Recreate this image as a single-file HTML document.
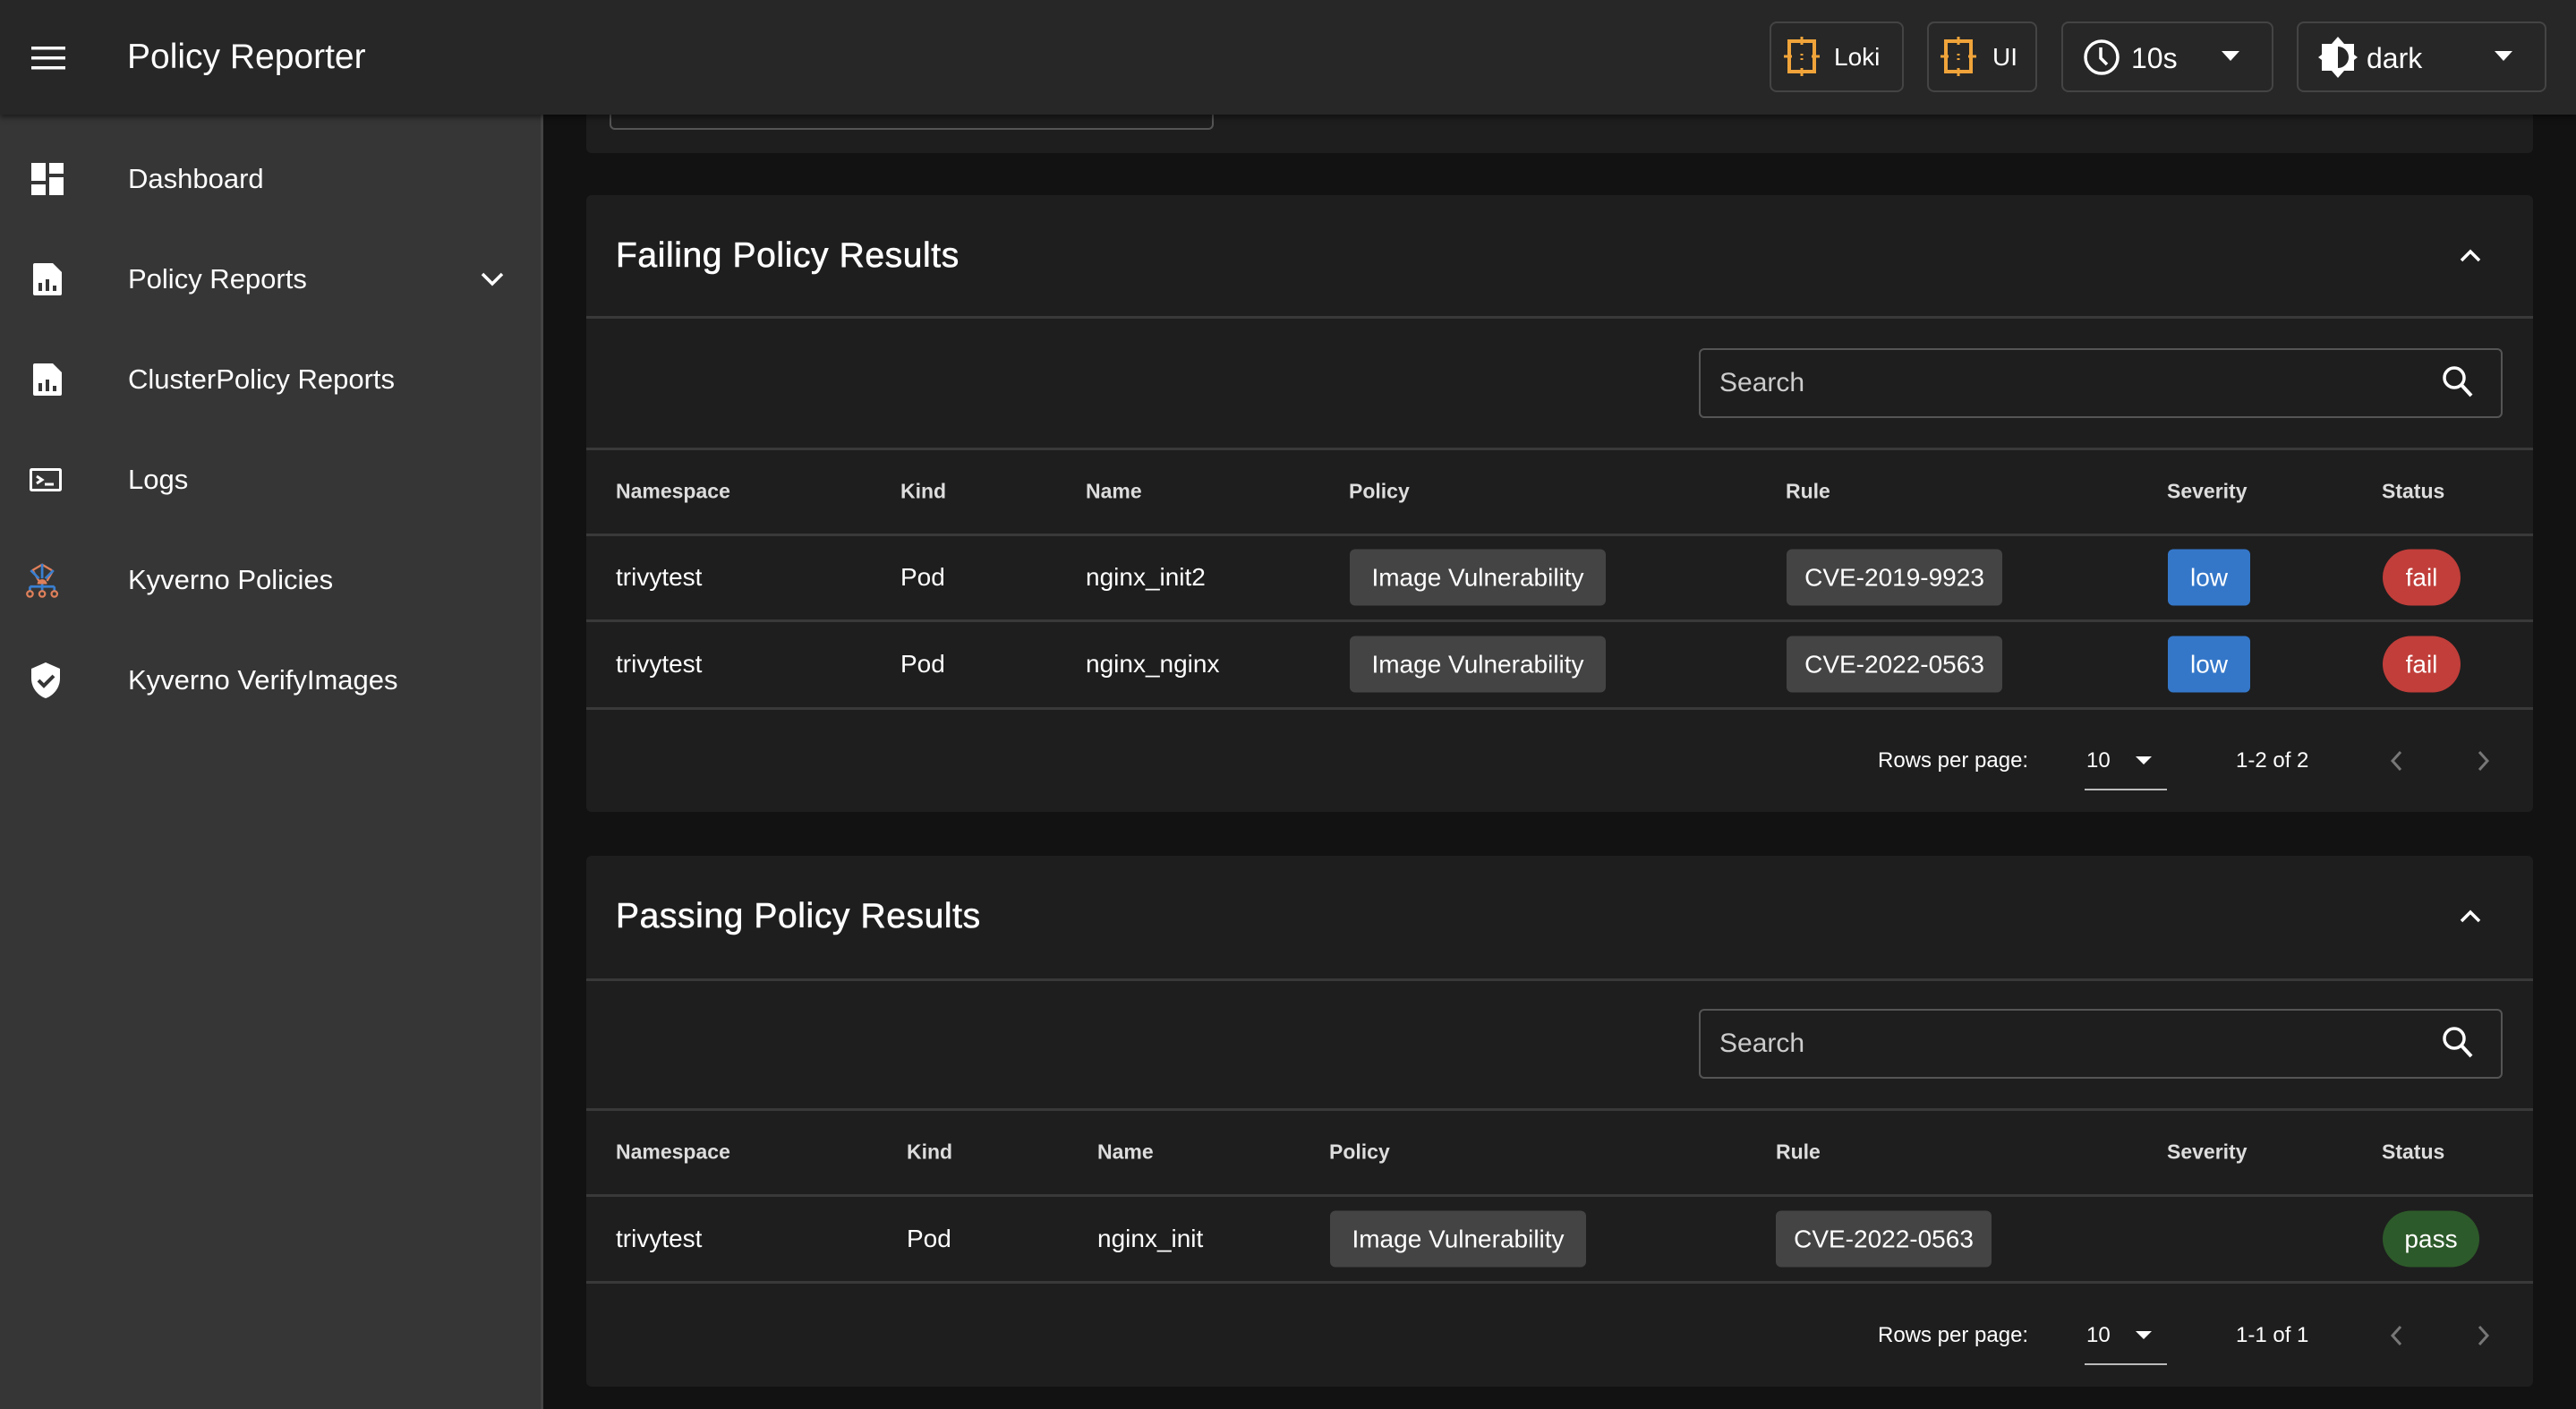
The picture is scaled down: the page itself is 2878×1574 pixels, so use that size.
<!DOCTYPE html>
<html><head><meta charset="utf-8"><style>
*{box-sizing:border-box;margin:0;padding:0}
body{width:2878px;height:1574px;background:#121212;font-family:"Liberation Sans",sans-serif;color:#fff;position:relative;overflow:hidden}
.a{position:absolute}
.bar{left:0;top:0;width:2878px;height:128px;background:#272727;box-shadow:0 3px 6px rgba(0,0,0,.5);z-index:5}
.side{left:0;top:128px;width:607px;height:1446px;background:#363636;border-right:3px solid #444}
.nav{left:143px;font-size:31px;color:#fff;transform:translateY(-50%)}
.ic{left:33px;transform:translateY(-50%)}
.btn{top:24px;height:79px;border:2px solid #444;border-radius:8px;background:#272727}
.card{left:655px;width:2175px;background:#1e1e1e;border-radius:6px}
.title{left:688px;font-size:39px;letter-spacing:0.6px;transform:translateY(-50%);-webkit-text-stroke:0.6px #fff}
.hr{left:655px;width:2175px;height:3px;background:#393939}
.search{left:1898px;width:898px;height:78px;border:2px solid #555;border-radius:6px}
.th{font-size:23px;font-weight:bold;color:#ddd;transform:translateY(-50%)}
.td{font-size:28px;color:#fff;transform:translateY(-50%)}
.chip{height:63px;line-height:63px;font-size:28px;text-align:center;border-radius:6px;transform:translateY(-50%)}
.pg{font-size:24px;transform:translateY(-50%)}
</style></head><body>
<div class="a bar">
 <svg class="a" style="left:35px;top:52px" width="38" height="26"><rect y="0" width="38" height="3.5" fill="#fff"/><rect y="11" width="38" height="3.5" fill="#fff"/><rect y="22" width="38" height="3.5" fill="#fff"/></svg>
 <div class="a" style="left:142px;top:42px;font-size:39px">Policy Reporter</div>
 <div class="a btn" style="left:1977px;width:150px"></div>
 <svg class="a" style="left:1993px;top:41px" width="40" height="44" viewBox="0 0 40 44"><rect x="6" y="5" width="28" height="34" fill="none" stroke="#f0a43a" stroke-width="4"/><path d="M20 0v9M20 35v9M0 22h9M31 22h9M20 19v2M20 24v2" stroke="#f0a43a" stroke-width="3"/></svg>
 <div class="a" style="left:2049px;top:48px;font-size:28px">Loki</div>
 <div class="a btn" style="left:2153px;width:123px"></div>
 <svg class="a" style="left:2168px;top:41px" width="40" height="44" viewBox="0 0 40 44"><rect x="6" y="5" width="28" height="34" fill="none" stroke="#f0a43a" stroke-width="4"/><path d="M20 0v9M20 35v9M0 22h9M31 22h9M20 19v2M20 24v2" stroke="#f0a43a" stroke-width="3"/></svg>
 <div class="a" style="left:2226px;top:48px;font-size:28px">UI</div>
 <div class="a btn" style="left:2303px;width:237px"></div>
 <svg class="a" style="left:2327px;top:43px" width="42" height="42" viewBox="0 0 42 42"><circle cx="21" cy="21" r="18" fill="none" stroke="#fff" stroke-width="3.5"/><path d="M20 10v12l7 7" fill="none" stroke="#fff" stroke-width="3.5"/></svg>
 <div class="a" style="left:2381px;top:47px;font-size:32px">10s</div>
 <div class="a" style="left:2482px;top:57px;width:0;height:0;border-left:10px solid transparent;border-right:10px solid transparent;border-top:11px solid #fff"></div>
 <div class="a btn" style="left:2566px;width:279px"></div>
 <svg class="a" style="left:2590px;top:41px" width="44" height="46" viewBox="0 0 44 46"><path d="M22 0l7 8h11v12l4 3-4 3v12H29l-7 8-7-8H4V26l-4-3 4-3V8h11z" fill="#fff"/><path d="M22 11a12 12 0 0 1 0 24z" fill="#272727"/></svg>
 <div class="a" style="left:2644px;top:47px;font-size:32px">dark</div>
 <div class="a" style="left:2787px;top:57px;width:0;height:0;border-left:10px solid transparent;border-right:10px solid transparent;border-top:11px solid #fff"></div>
</div>
<div class="a side"></div>
<svg class="a ic" style="top:200px" width="40" height="40" viewBox="0 0 40 40"><rect x="2" y="2" width="16" height="20" fill="#fff"/><rect x="2" y="26" width="16" height="12" fill="#fff"/><rect x="22" y="2" width="16" height="12" fill="#fff"/><rect x="22" y="18" width="16" height="20" fill="#fff"/></svg>
<div class="a nav" style="top:200px">Dashboard</div>
<svg class="a ic" style="top:312px" width="40" height="40" viewBox="0 0 40 40"><path d="M6 2h20l10 10v24a2 2 0 0 1-2 2H6a2 2 0 0 1-2-2V4a2 2 0 0 1 2-2z" fill="#fff"/><rect x="10" y="24" width="4" height="9" fill="#363636"/><rect x="18" y="20" width="4" height="13" fill="#363636"/><rect x="26" y="27" width="4" height="6" fill="#363636"/></svg>
<div class="a nav" style="top:312px">Policy Reports</div>
<svg class="a" style="left:537px;top:303px" width="26" height="17"><path d="M2 3l11 11 11-11" fill="none" stroke="#fff" stroke-width="3.5"/></svg>
<svg class="a ic" style="top:424px" width="40" height="40" viewBox="0 0 40 40"><path d="M6 2h20l10 10v24a2 2 0 0 1-2 2H6a2 2 0 0 1-2-2V4a2 2 0 0 1 2-2z" fill="#fff"/><rect x="10" y="24" width="4" height="9" fill="#363636"/><rect x="18" y="20" width="4" height="13" fill="#363636"/><rect x="26" y="27" width="4" height="6" fill="#363636"/></svg>
<div class="a nav" style="top:424px">ClusterPolicy Reports</div>
<svg class="a ic" style="top:536px" width="36" height="26" viewBox="0 0 36 26"><rect x="1.5" y="1.5" width="33" height="23" rx="1" fill="none" stroke="#fff" stroke-width="3"/><path d="M8 9l6 4-6 4M17 18h10" fill="none" stroke="#fff" stroke-width="3"/></svg>
<div class="a nav" style="top:536px">Logs</div>
<svg class="a" style="left:28px;top:628px" width="40" height="40" viewBox="0 0 42 44"><path d="M8 10l12-7 12 7M9 11l7 12M33 11l-7 12" stroke="#e0805a" stroke-width="2.5" fill="none"/><path d="M20 2v18M6 10l10 10M34 10l-10 10M5 30h30M5 30v6M20 30v6M35 30v6M20 25v5" stroke="#3a7fd0" stroke-width="3" fill="none"/><path d="M14 27a6 6 0 0 1 12 0z" fill="#e0805a"/><circle cx="5" cy="39" r="3.5" fill="none" stroke="#e0805a" stroke-width="2.5"/><circle cx="20" cy="39" r="3.5" fill="none" stroke="#e0805a" stroke-width="2.5"/><circle cx="35" cy="39" r="3.5" fill="none" stroke="#e0805a" stroke-width="2.5"/></svg>
<div class="a nav" style="top:648px">Kyverno Policies</div>
<svg class="a ic" style="top:760px" width="36" height="42" viewBox="0 0 36 42"><path d="M18 1L2 8v11c0 10 7 19 16 22 9-3 16-12 16-22V8z" fill="#fff"/><path d="M10 21l6 6 11-11" fill="none" stroke="#363636" stroke-width="4"/></svg>
<div class="a nav" style="top:760px">Kyverno VerifyImages</div>

<div class="a card" style="top:100px;height:71px;border-radius:0 0 6px 6px"></div>
<div class="a" style="left:681px;top:100px;width:675px;height:45px;border:2px solid #555;border-top:none;border-radius:0 0 6px 6px"></div>

<div class="a card" style="top:218px;height:689px"></div>
<div class="a title" style="top:286px">Failing Policy Results</div>
<svg class="a" style="left:2748px;top:278px" width="24" height="16"><path d="M2 13l10-10 10 10" fill="none" stroke="#fff" stroke-width="3.5"/></svg>
<div class="a hr" style="top:353px"></div>
<div class="a search" style="top:389px"></div>
<div class="a" style="left:1921px;top:411px;font-size:30px;color:#ccc">Search</div>
<svg class="a" style="left:2728px;top:408px" width="36" height="38" viewBox="0 0 36 38"><circle cx="14" cy="14" r="11" fill="none" stroke="#fff" stroke-width="3.5"/><path d="M22 22l11 12" stroke="#fff" stroke-width="4"/></svg>
<div class="a hr" style="top:500px"></div>
<div class="a th" style="left:688px;top:549px">Namespace</div>
<div class="a th" style="left:1006px;top:549px">Kind</div>
<div class="a th" style="left:1213px;top:549px">Name</div>
<div class="a th" style="left:1507px;top:549px">Policy</div>
<div class="a th" style="left:1995px;top:549px">Rule</div>
<div class="a th" style="left:2421px;top:549px">Severity</div>
<div class="a th" style="left:2661px;top:549px">Status</div>
<div class="a hr" style="top:596px"></div>
<div class="a td" style="left:688px;top:645px">trivytest</div>
<div class="a td" style="left:1006px;top:645px">Pod</div>
<div class="a td" style="left:1213px;top:645px">nginx_init2</div>
<div class="a chip" style="left:1508px;top:645px;width:286px;background:#444">Image Vulnerability</div>
<div class="a chip" style="left:1996px;top:645px;width:241px;background:#444">CVE-2019-9923</div>
<div class="a chip" style="left:2422px;top:645px;width:92px;background:#3477c9">low</div>
<div class="a chip" style="left:2662px;top:645px;width:87px;background:#c13e3a;border-radius:32px">fail</div>
<div class="a hr" style="top:692px"></div>
<div class="a td" style="left:688px;top:742px">trivytest</div>
<div class="a td" style="left:1006px;top:742px">Pod</div>
<div class="a td" style="left:1213px;top:742px">nginx_nginx</div>
<div class="a chip" style="left:1508px;top:742px;width:286px;background:#444">Image Vulnerability</div>
<div class="a chip" style="left:1996px;top:742px;width:241px;background:#444">CVE-2022-0563</div>
<div class="a chip" style="left:2422px;top:742px;width:92px;background:#3477c9">low</div>
<div class="a chip" style="left:2662px;top:742px;width:87px;background:#c13e3a;border-radius:32px">fail</div>
<div class="a hr" style="top:790px"></div>
<div class="a pg" style="left:2098px;top:850px">Rows per page:</div>
<div class="a pg" style="left:2331px;top:850px">10</div>
<div class="a" style="left:2386px;top:845px;border-left:9px solid transparent;border-right:9px solid transparent;border-top:9px solid #fff"></div>
<div class="a" style="left:2329px;top:881px;width:92px;height:2px;background:#bbb"></div>
<div class="a pg" style="left:2498px;top:850px">1-2 of 2</div>
<svg class="a" style="left:2670px;top:838px" width="14" height="24"><path d="M12 2L3 12l9 10" fill="none" stroke="#777" stroke-width="3"/></svg>
<svg class="a" style="left:2768px;top:838px" width="14" height="24"><path d="M2 2l9 10-9 10" fill="none" stroke="#777" stroke-width="3"/></svg>

<div class="a card" style="top:956px;height:593px"></div>
<div class="a title" style="top:1024px">Passing Policy Results</div>
<svg class="a" style="left:2748px;top:1016px" width="24" height="16"><path d="M2 13l10-10 10 10" fill="none" stroke="#fff" stroke-width="3.5"/></svg>
<div class="a hr" style="top:1093px"></div>
<div class="a search" style="top:1127px"></div>
<div class="a" style="left:1921px;top:1149px;font-size:30px;color:#ccc">Search</div>
<svg class="a" style="left:2728px;top:1146px" width="36" height="38" viewBox="0 0 36 38"><circle cx="14" cy="14" r="11" fill="none" stroke="#fff" stroke-width="3.5"/><path d="M22 22l11 12" stroke="#fff" stroke-width="4"/></svg>
<div class="a hr" style="top:1238px"></div>
<div class="a th" style="left:688px;top:1287px">Namespace</div>
<div class="a th" style="left:1013px;top:1287px">Kind</div>
<div class="a th" style="left:1226px;top:1287px">Name</div>
<div class="a th" style="left:1485px;top:1287px">Policy</div>
<div class="a th" style="left:1984px;top:1287px">Rule</div>
<div class="a th" style="left:2421px;top:1287px">Severity</div>
<div class="a th" style="left:2661px;top:1287px">Status</div>
<div class="a hr" style="top:1334px"></div>
<div class="a td" style="left:688px;top:1384px">trivytest</div>
<div class="a td" style="left:1013px;top:1384px">Pod</div>
<div class="a td" style="left:1226px;top:1384px">nginx_init</div>
<div class="a chip" style="left:1486px;top:1384px;width:286px;background:#444">Image Vulnerability</div>
<div class="a chip" style="left:1984px;top:1384px;width:241px;background:#444">CVE-2022-0563</div>
<div class="a chip" style="left:2662px;top:1384px;width:108px;background:#2d5a2a;border-radius:32px">pass</div>
<div class="a hr" style="top:1431px"></div>
<div class="a pg" style="left:2098px;top:1492px">Rows per page:</div>
<div class="a pg" style="left:2331px;top:1492px">10</div>
<div class="a" style="left:2386px;top:1487px;border-left:9px solid transparent;border-right:9px solid transparent;border-top:9px solid #fff"></div>
<div class="a" style="left:2329px;top:1523px;width:92px;height:2px;background:#bbb"></div>
<div class="a pg" style="left:2498px;top:1492px">1-1 of 1</div>
<svg class="a" style="left:2670px;top:1480px" width="14" height="24"><path d="M12 2L3 12l9 10" fill="none" stroke="#777" stroke-width="3"/></svg>
<svg class="a" style="left:2768px;top:1480px" width="14" height="24"><path d="M2 2l9 10-9 10" fill="none" stroke="#777" stroke-width="3"/></svg>
</body></html>
